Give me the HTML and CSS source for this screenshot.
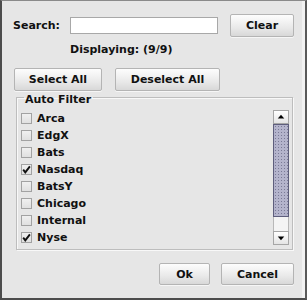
FILE: index.html
```html
<!DOCTYPE html>
<html lang="en">
<head>
    <meta charset="UTF-8">
    <title>Auto Filter</title>
    <link rel="stylesheet" href="styles.css">
</head>
<body>
    <div class="dialog">
        <div class="search-row">
            <label class="label" for="search">Search:</label>
            <input class="search" id="search" type="text">
            <button class="btn clear">Clear</button>
        </div>
        <div class="status">Displaying: (9/9)</div>
        <div class="select-row">
            <button class="btn select-all">Select All</button>
            <button class="btn deselect-all">Deselect All</button>
        </div>
        <fieldset class="filter">
            <legend>Auto Filter</legend>
            <div class="list-wrap">
                <ul class="list">
                    <li><span class="box"></span>Arca</li>
                    <li><span class="box"></span>EdgX</li>
                    <li><span class="box"></span>Bats</li>
                    <li><span class="box"><svg viewBox="0 0 11 11" width="11" height="11"><path d="M2.2 5.6 L4.3 8.4 L8.9 2.4" fill="none" stroke="#111" stroke-width="1.9"/></svg></span>Nasdaq</li>
                    <li><span class="box"></span>BatsY</li>
                    <li><span class="box"></span>Chicago</li>
                    <li><span class="box"></span>Internal</li>
                    <li><span class="box"><svg viewBox="0 0 11 11" width="11" height="11"><path d="M2.2 5.6 L4.3 8.4 L8.9 2.4" fill="none" stroke="#111" stroke-width="1.9"/></svg></span>Nyse</li>
                </ul>
                <div class="scrollbar">
                    <div class="arrow"><svg viewBox="0 0 15 14" width="15" height="14"><path d="M4 8.5 L11 8.5 L7.5 4.5 Z" fill="#000"/></svg></div>
                    <div class="thumb"></div>
                    <div class="track"></div>
                    <div class="arrow"><svg viewBox="0 0 15 14" width="15" height="14"><path d="M4 5.5 L11 5.5 L7.5 9.5 Z" fill="#000"/></svg></div>
                </div>
            </div>
        </fieldset>
        <div class="footer">
            <button class="btn ok">Ok</button>
            <button class="btn cancel">Cancel</button>
        </div>
    </div>
</body>
</html>
```

FILE: styles.css
```css
body {
    margin: 0;
    padding: 0;
    font-family: 'DejaVu Sans', sans-serif;
    font-weight: bold;
    font-size: 11px;
    color: #111;
}
.dialog {
    width: 307px;
    height: 300px;
    box-sizing: border-box;
    background: #e6e6e6;
    border-top: 1px solid #8a8a8a;
    border-left: 2px solid #4c4c4c;
    border-right: 2px solid #5a5a5a;
    border-bottom: 2px solid #4c4c4c;
    box-shadow: inset -3px 0 0 #f2f2f2;
    padding: 13px 0 0 11px;
}
.btn {
    font-family: inherit;
    font-weight: bold;
    font-size: 11px;
    color: #111;
    height: 23px;
    padding: 0;
    border: 1px solid #b4b4b4;
    border-radius: 2px;
    background: linear-gradient(#fdfdfd, #e9e9e9 60%, #d8d8d8);
    box-shadow: 0 1px 0 #f6f6f6;
}
.search-row {
    display: flex;
    align-items: center;
    height: 23px;
}
.label {
    width: 57px;
}
.search {
    width: 148px;
    height: 17px;
    box-sizing: border-box;
    margin: 0 12px 0 0;
    border: 1px solid #a8a8a8;
    background: #fff;
    padding: 0;
}
.clear {
    width: 64px;
}
.status {
    margin-top: 6px;
    padding-left: 57px;
    line-height: 14px;
}
.select-row {
    display: flex;
    gap: 13px;
    margin-top: 11px;
    padding-left: 1px;
}
.select-all {
    width: 88px;
}
.deselect-all {
    width: 105px;
}
.filter {
    margin: -3px 0 0 3px;
    width: 277px;
    height: 162px;
    box-sizing: border-box;
    padding: 0 3px 0 4px;
    border: 1px solid #bdbdbd;
    box-shadow: inset 1px 1px 0 #f8f8f8, 1px 1px 0 #f8f8f8;
}
.filter legend {
    padding: 5px 2px 0 1px;
    margin-left: 3px;
    line-height: 13px;
}
.list-wrap {
    display: flex;
    justify-content: space-between;
    margin-top: 4px;
}
.list {
    list-style: none;
    margin: 0;
    padding: 0;
}
.list li {
    display: flex;
    align-items: center;
    height: 17px;
}
.box {
    width: 11px;
    height: 11px;
    box-sizing: border-box;
    border: 1px solid #a2a2a2;
    background: linear-gradient(#f0f0f0, #e0e0e0);
    margin-right: 5px;
    position: relative;
}
.box svg {
    position: absolute;
    left: -1px;
    top: -1px;
}
.scrollbar {
    display: flex;
    flex-direction: column;
    width: 16px;
}
.arrow {
    height: 14px;
    box-sizing: border-box;
    border: 1px solid #a6a6a6;
    background: linear-gradient(#ffffff, #e4e4e4);
    display: flex;
    justify-content: center;
    align-items: center;
}
.thumb {
    height: 93px;
    box-sizing: border-box;
    border: 1px solid #5e5e7c;
    background-color: #b4b4cc;
    background-image: radial-gradient(#7a7a96 0.8px, transparent 0.9px);
    background-size: 3px 3px;
}
.track {
    height: 14px;
    background: #f4f4f4;
    border-left: 1px solid #b8b8b8;
    border-right: 1px solid #b8b8b8;
}
.footer {
    display: flex;
    justify-content: flex-end;
    gap: 11px;
    margin-top: 13px;
    padding-right: 11px;
}
.footer .btn {
    height: 22px;
}
.ok {
    width: 51px;
}
.cancel {
    width: 73px;
}
```
